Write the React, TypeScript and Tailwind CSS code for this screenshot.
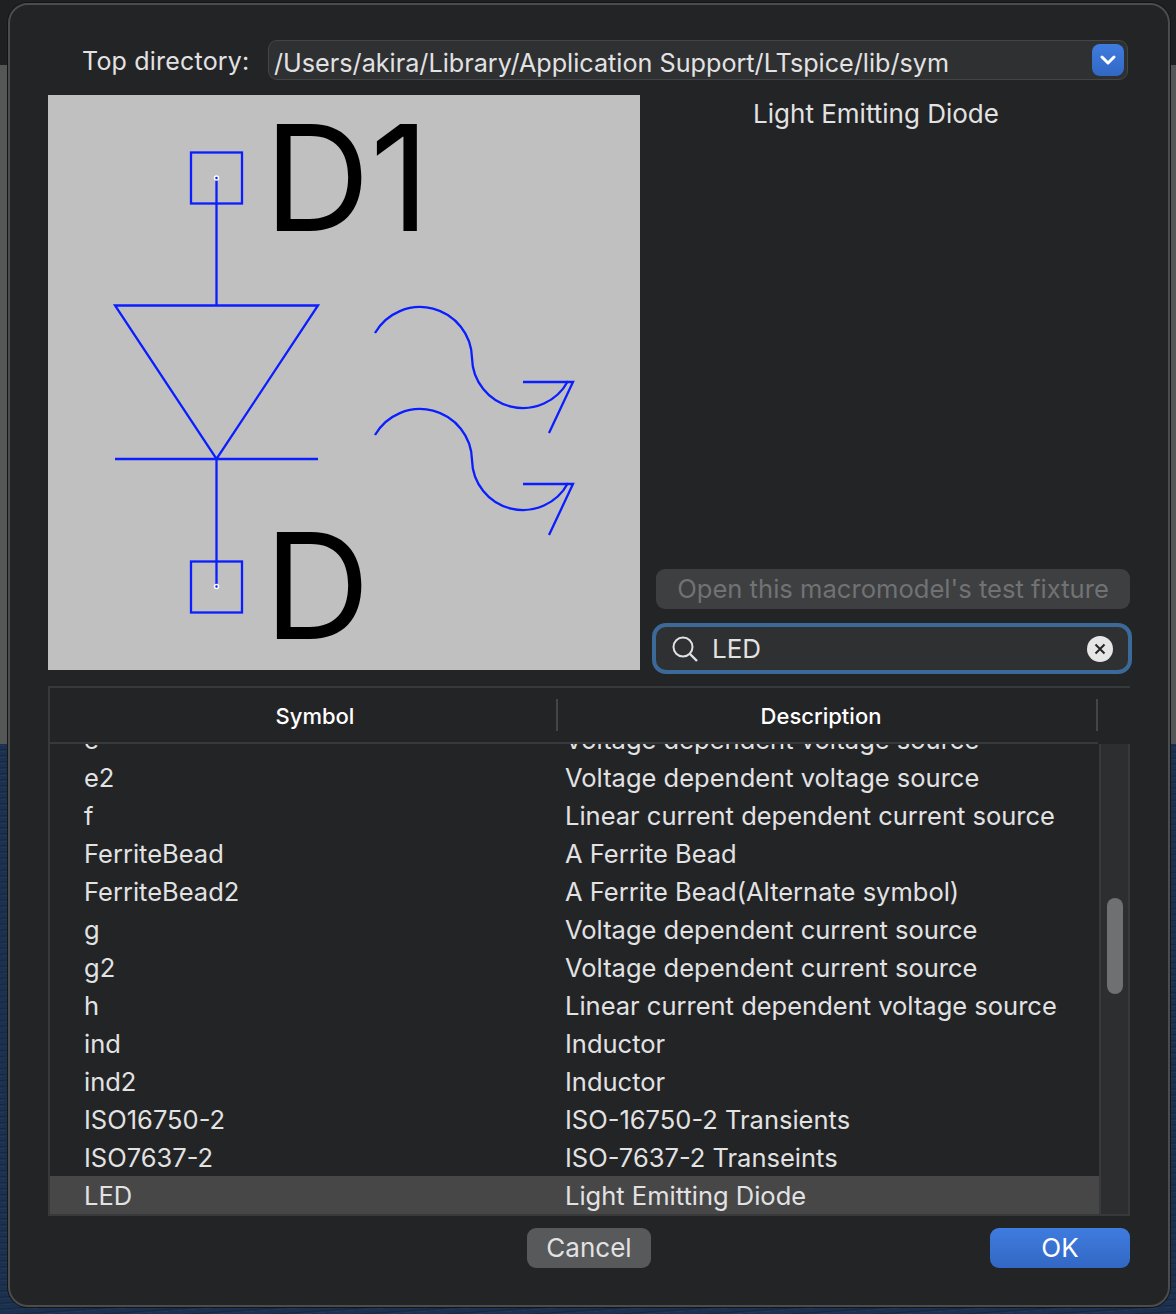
import { ChevronDown } from "lucide-react";

const rows = [
  ["e", "Voltage dependent voltage source"],
  ["e2", "Voltage dependent voltage source"],
  ["f", "Linear current dependent current source"],
  ["FerriteBead", "A Ferrite Bead"],
  ["FerriteBead2", "A Ferrite Bead(Alternate symbol)"],
  ["g", "Voltage dependent current source"],
  ["g2", "Voltage dependent current source"],
  ["h", "Linear current dependent voltage source"],
  ["ind", "Inductor"],
  ["ind2", "Inductor"],
  ["ISO16750-2", "ISO-16750-2 Transients"],
  ["ISO7637-2", "ISO-7637-2 Transeints"],
  ["LED", "Light Emitting Diode"],
];

function LedSymbol() {
  return (
    <svg viewBox="48 95 592 575" className="absolute inset-0 h-full w-full" fill="none" stroke="#0a1eff" strokeWidth="2.3">
      <rect x="191" y="152.5" width="51" height="51" />
      <rect x="191" y="561.5" width="51" height="51" />
      <path d="M216.5 178V305M216.5 459V586" />
      <path d="M115 305.5H318L216.5 459Z" />
      <path d="M115 459H318" />
      <circle cx="216.5" cy="178" r="2" fill="#0a1eff" stroke="#fff" strokeWidth="1.5" />
      <circle cx="216.5" cy="586.5" r="2" fill="#0a1eff" stroke="#fff" strokeWidth="1.5" />
      <path d="M375 333A52 52 0 0 1 472 358A51 51 0 0 0 568 381" />
      <path d="M523 382H573L549 433" />
      <path d="M375 435A52 52 0 0 1 472 460A51 51 0 0 0 568 483" />
      <path d="M523 484H573L549 535" />
    </svg>
  );
}

export default function App() {
  return (
    <div className="relative h-[1314px] w-[1176px] overflow-hidden bg-[#1c3150] bg-[repeating-linear-gradient(176deg,#1c3150_0px,#1c3150_3px,#16283f_4px,#24395a_6px)] font-['Inter',sans-serif] text-[#e2e2e3]">
      {/* window behind the sheet */}
      <div className="absolute left-0 top-0 h-[744px] w-full bg-[#555756]" />
      <div className="absolute left-0 top-0 h-[65px] w-full bg-[#1f2021]" />

      <div className="relative ml-[8px] mt-[3px] flex h-[1304px] w-[1162px] flex-col rounded-[20px] border-2 border-[#4b4c4d] bg-[#232426] pl-[38px] pr-[38px] shadow-[0_0_0_1px_#141516]">
        <div className="mt-[35px] flex h-[40px] items-center">
          <span className="ml-[34px] w-[186px] pt-[2px] text-[25px] leading-none tracking-[0.2px]">Top directory:</span>
          <div className="flex h-[40px] w-[860px] items-center justify-between rounded-[9px] border border-[#444547] bg-[#2f3032] pl-[5px] pr-[3px]">
            <span className="pt-[7px] text-[25.2px] leading-none">/Users/akira/Library/Application Support/LTspice/lib/sym</span>
            <span className="flex h-[32px] w-[32px] items-center justify-center rounded-[8px] bg-gradient-to-b from-[#3f7cdf] to-[#3268c4]">
              <ChevronDown className="h-[24px] w-[24px] text-white" strokeWidth={3} />
            </span>
          </div>
        </div>

        <div className="mt-[15px] flex h-[575px]">
          <div className="relative h-[575px] w-[592px] bg-[#c0c0c0] text-black">
            <LedSymbol />
            <span className="absolute left-[216px] top-[-5px] text-[147px] leading-[1.2]">D1</span>
            <span className="absolute left-[216px] top-[403px] text-[147px] leading-[1.2]">D</span>
          </div>
          <div className="ml-[16px] flex w-[474px] flex-col">
            <div className="mt-[3px] pr-[34px] text-center text-[26px] leading-[32px]">Light Emitting Diode</div>
            <div className="mt-auto flex h-[40px] w-[474px] items-center justify-center rounded-[9px] bg-[#3e3f41] text-[25.6px] leading-none text-[#717274]">
              Open this macromodel's test fixture
            </div>
            <div className="-mb-[4px] -ml-[4px] mt-[14px] flex h-[51px] w-[480px] items-center rounded-[14px] border-[4px] border-[#3b6a99] bg-[#2f3032] pl-[16px] pr-[15px]">
              <svg viewBox="0 0 26 26" className="h-[26px] w-[26px]" fill="none" stroke="#e2e2e3" strokeWidth="2">
                <circle cx="11" cy="11" r="9.5" />
                <path d="M18 18L25 25" strokeWidth="2.4" />
              </svg>
              <span className="ml-[14px] text-[26px] leading-none">LED</span>
              <span className="ml-auto flex h-[26px] w-[26px] items-center justify-center rounded-full bg-[#e6e6e6]">
                <svg viewBox="0 0 12 12" className="h-[12px] w-[12px]" fill="none" stroke="#232426" strokeWidth="2">
                  <path d="M1.5 1.5L10.5 10.5M10.5 1.5L1.5 10.5" />
                </svg>
              </span>
            </div>
          </div>
        </div>

        <div className="mt-[16px] flex h-[530px] w-[1082px] flex-col border-2 border-r-0 border-[#38393b]">
          <div className="flex h-[56px] shrink-0 text-[22px] font-medium text-white">
            <div className="flex w-[1048px] items-center border-b-2 border-[#38393b]">
              <div className="flex h-[32px] w-[508px] items-center justify-center border-r-2 border-[#444547] pl-[24px] pt-[2px]">Symbol</div>
              <div className="flex h-[32px] w-[540px] items-center justify-center border-r-2 border-[#444547] pr-[12px] pt-[2px]">Description</div>
            </div>
            <div className="grow" />
          </div>
          <div className="flex min-h-0 grow">
            <div className="flex w-[1049px] flex-col justify-end overflow-hidden text-[25.5px]">
              {rows.map(([name, desc]) => (
                <div key={name} className={`flex h-[38px] shrink-0 items-center pt-[3px] ${name === "LED" ? "bg-[#474747]" : ""}`}>
                  <span className="w-[515px] pl-[34px]">{name}</span>
                  <span>{desc}</span>
                </div>
              ))}
            </div>
            <div className="relative w-[31px] border-x-2 border-[#38393b] bg-[#2d2e30]">
              <div className="absolute left-[6px] top-[154px] h-[96px] w-[16px] rounded-full bg-[#6f7071]" />
            </div>
          </div>
        </div>

        <div className="mt-[12px] flex items-center">
          <button className="ml-[479px] flex h-[40px] w-[124px] items-center justify-center rounded-[9px] bg-[#58595b] text-[26px] leading-none">Cancel</button>
          <button className="ml-[339px] flex h-[40px] w-[140px] items-center justify-center rounded-[9px] bg-gradient-to-b from-[#3f7cdf] to-[#3268c4] text-[26px] leading-none text-white">OK</button>
        </div>
      </div>
    </div>
  );
}
